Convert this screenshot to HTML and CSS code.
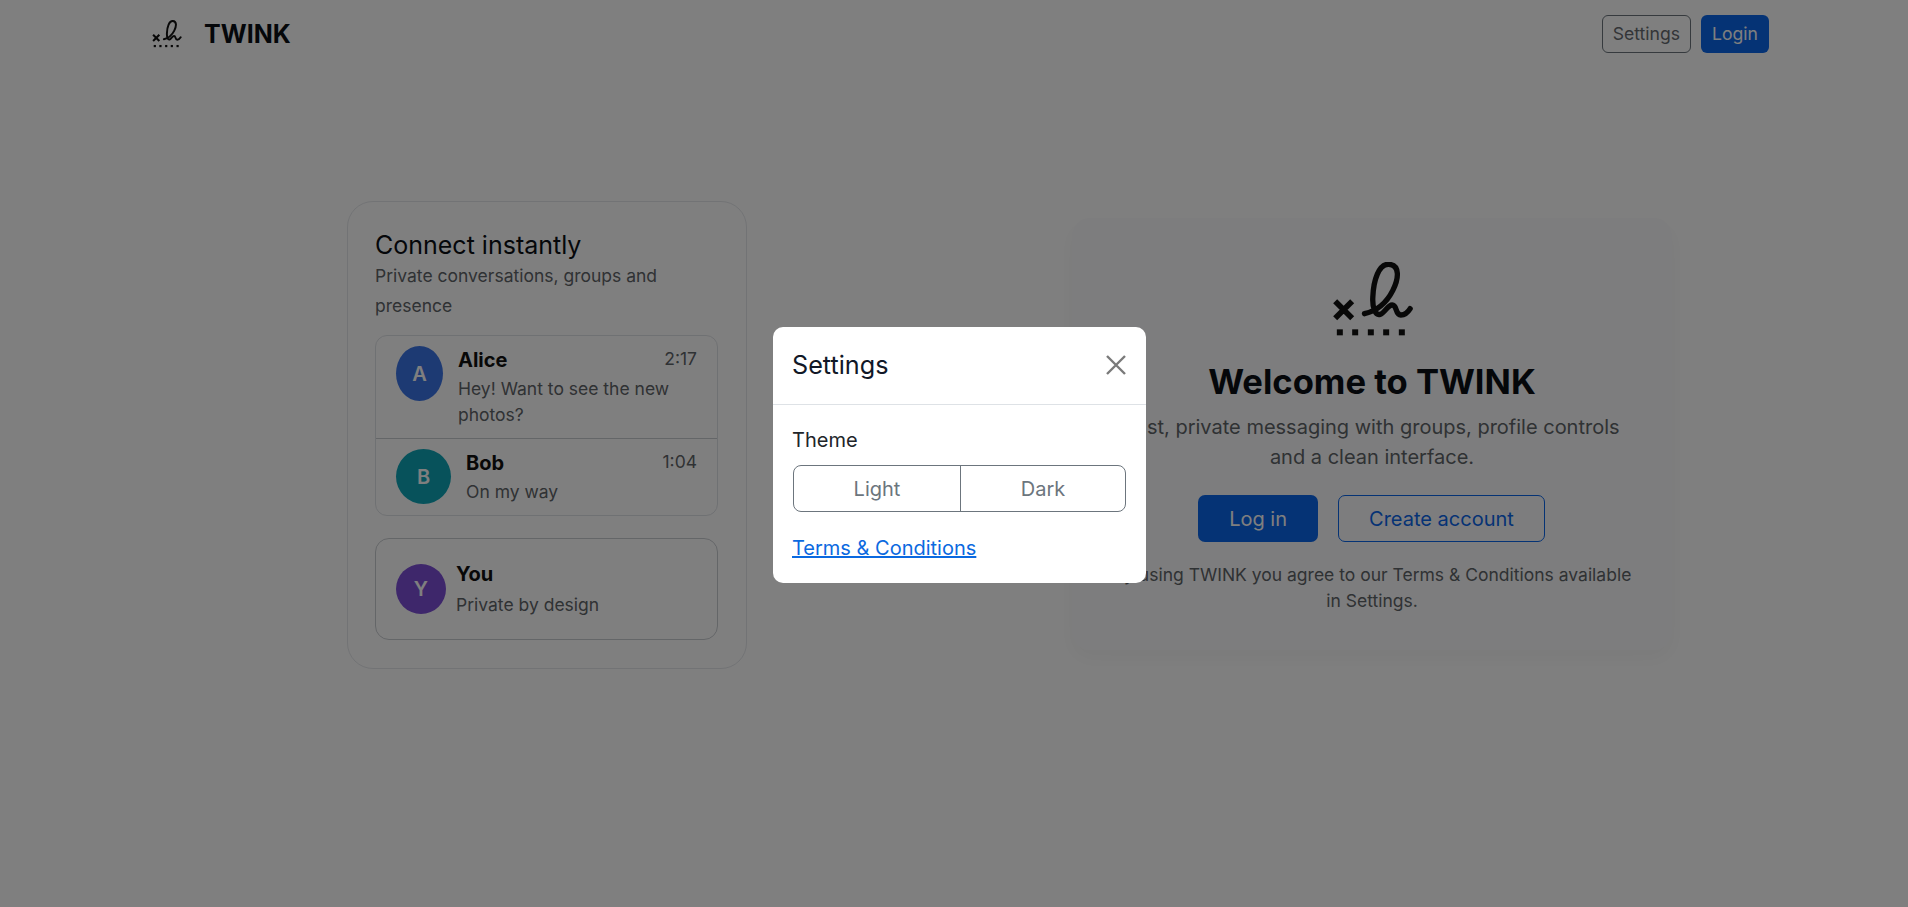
FILE: index.html
```html
<!DOCTYPE html>
<html lang="en">
<head>
    <meta charset="UTF-8">
    <title>TWINK</title>
    <link rel="stylesheet" href="styles.css">
</head>
<body>
    <svg class="defs" width="0" height="0">
        <symbol id="logo" viewBox="100 65 245 225">
            <path d="M197 220 C232 212 262 190 282 150 C300 115 304 74 270 72 C240 70 224 120 222 170 C220 205 230 226 244 222 C258 218 266 194 280 194 C296 194 288 224 306 224 C318 224 328 215 334 205" fill="none" stroke="currentColor" stroke-width="16" stroke-linecap="round"/>
            <path d="M109 183 L160 234 M160 183 L109 234" fill="none" stroke="currentColor" stroke-width="17"/>
            <rect x="114" y="267" width="18" height="18" fill="currentColor"/>
            <rect x="160" y="267" width="18" height="18" fill="currentColor"/>
            <rect x="207" y="267" width="18" height="18" fill="currentColor"/>
            <rect x="253" y="267" width="18" height="18" fill="currentColor"/>
            <rect x="300" y="267" width="18" height="18" fill="currentColor"/>
        </symbol>
    </svg>

    <nav class="navbar">
        <div class="brand">
            <svg class="brand-logo"><use href="#logo"/></svg>
            <span class="brand-name">TWINK</span>
        </div>
        <div class="nav-actions">
            <button type="button" class="btn btn-ghost">Settings</button>
            <button type="button" class="btn btn-primary">Login</button>
        </div>
    </nav>

    <main class="hero">
        <section class="preview">
            <h2 class="preview-title">Connect instantly</h2>
            <p class="preview-sub">Private conversations, groups and presence</p>

            <div class="chat-list">
                <div class="chat-row">
                    <div class="avatar avatar-blue avatar-squeezed">A</div>
                    <div class="chat-body">
                        <div class="chat-head">
                            <span class="chat-name">Alice</span>
                            <span class="chat-time">2:17</span>
                        </div>
                        <div class="chat-msg">Hey! Want to see the new photos?</div>
                    </div>
                </div>
                <div class="chat-row">
                    <div class="avatar avatar-teal">B</div>
                    <div class="chat-body">
                        <div class="chat-head">
                            <span class="chat-name">Bob</span>
                            <span class="chat-time">1:04</span>
                        </div>
                        <div class="chat-msg">On my way</div>
                    </div>
                </div>
            </div>

            <div class="you-card">
                <div class="avatar avatar-purple avatar-you">Y</div>
                <div class="you-body">
                    <div class="chat-name you-name">You</div>
                    <div class="you-sub">Private by design</div>
                </div>
            </div>
        </section>

        <section class="welcome">
            <svg class="welcome-logo"><use href="#logo"/></svg>
            <h1 class="welcome-title">Welcome to TWINK</h1>
            <p class="welcome-text">Fast, private messaging with groups, profile controls and a clean interface.</p>
            <div class="welcome-actions">
                <button type="button" class="btn btn-primary btn-lg">Log in</button>
                <button type="button" class="btn btn-outline btn-lg">Create account</button>
            </div>
            <p class="welcome-note">By using TWINK you agree to our Terms &amp; Conditions available in Settings.</p>
        </section>
    </main>

    <div class="backdrop"></div>

    <div class="modal">
        <div class="modal-header">
            <h3 class="modal-title">Settings</h3>
            <svg class="modal-close" viewBox="0 0 20 20"><path d="M1 1 L19 19 M19 1 L1 19" fill="none" stroke="#7a7a7a" stroke-width="2.4"/></svg>
        </div>
        <div class="modal-body">
            <div class="theme-label">Theme</div>
            <div class="segment">
                <button type="button" class="segment-btn">Light</button>
                <button type="button" class="segment-btn">Dark</button>
            </div>
            <a class="terms-link" href="#">Terms &amp; Conditions</a>
        </div>
    </div>
</body>
</html>
```

FILE: styles.css
```css
* {
    box-sizing: border-box;
}
html, body {
    height: 100%;
}
body {
    margin: 0;
    background: #fff;
    color: #111827;
    font-family: Inter, "Liberation Sans", sans-serif;
    overflow: hidden;
}
h1, h2, h3, p {
    margin: 0;
}
.defs {
    position: absolute;
}

/* top bar */
.navbar {
    display: flex;
    justify-content: space-between;
    align-items: center;
    height: 68px;
    padding: 0 139px 0 152px;
}
.brand {
    display: flex;
    align-items: center;
    gap: 22px;
}
.brand-logo {
    width: 30px;
    height: 28px;
    color: #111;
}
.brand-name {
    font-size: 25px;
    font-weight: 700;
    color: #0b0f14;
}
.nav-actions {
    display: flex;
    gap: 10px;
}
.btn {
    height: 38px;
    padding: 0 10px;
    border: 1px solid transparent;
    border-radius: 6px;
    font-family: inherit;
    font-size: 17.6px;
    line-height: 1;
}
.btn-ghost {
    background: transparent;
    border-color: #6c757d;
    color: #666b70;
}
.btn-primary {
    background: #0b66ea;
    color: #fff;
}
.btn-outline {
    background: transparent;
    border-color: #0b66ea;
    color: #0b66ea;
}
.btn-lg {
    height: 47px;
    padding: 0 30px;
    border-radius: 7px;
    font-size: 20px;
}

/* main area */
.hero {
    display: flex;
    align-items: flex-start;
    gap: 325px;
    padding: 133px 0 0 347px;
}
.preview {
    width: 400px;
    padding: 28px 28px 28px 27px;
    border: 1px solid #e5e7eb;
    border-radius: 26px;
}
.preview-title {
    font-size: 25px;
    font-weight: 400;
    line-height: 30px;
    color: #0b0f14;
}
.preview-sub {
    margin-top: 1px;
    font-size: 17.5px;
    line-height: 30px;
    color: #5f6468;
}
.chat-list {
    margin-top: 14px;
    border: 1px solid #dfe2e6;
    border-radius: 12px;
}
.chat-row {
    display: flex;
    gap: 15px;
    padding: 10px 20px;
}
.chat-row + .chat-row {
    border-top: 1px solid #c9ccd1;
}
.avatar {
    flex: none;
    display: flex;
    justify-content: center;
    align-items: center;
    width: 55px;
    height: 55px;
    border-radius: 50%;
    color: #fff;
    font-size: 20px;
    font-weight: 600;
}
.avatar-squeezed {
    width: 47px;
}
.avatar-you {
    width: 50px;
    height: 50px;
}
.avatar-blue {
    background: #3b74e6;
}
.avatar-teal {
    background: #0ea5b7;
}
.avatar-purple {
    background: #7c4fd6;
}
.chat-body {
    flex: 1;
}
.chat-head {
    display: flex;
    justify-content: space-between;
}
.chat-name {
    font-size: 20px;
    font-weight: 700;
    line-height: 29px;
    color: #111;
}
.chat-time {
    font-size: 17.5px;
    line-height: 25px;
    color: #5f6468;
}
.chat-msg {
    margin-top: 1px;
    font-size: 17.5px;
    line-height: 26px;
    color: #5f6468;
}
.you-card {
    display: flex;
    align-items: center;
    gap: 10px;
    height: 102px;
    margin-top: 22px;
    padding: 0 20px;
    border: 1px solid #c9ccd1;
    border-radius: 14px;
}
.you-body {
    padding-top: 2px;
}
.you-name {
    line-height: 29px;
}
.you-sub {
    font-size: 17.5px;
    line-height: 31px;
    color: #5f6468;
}

.welcome {
    display: flex;
    flex-direction: column;
    align-items: center;
    width: 600px;
    height: 432px;
    margin-top: 17px;
    padding: 44px 36px 0;
    border-radius: 18px;
    background: #fbfbfc;
    box-shadow: 0 8px 20px rgba(0, 0, 0, 0.04);
    text-align: center;
}
.welcome-logo {
    width: 82px;
    height: 75px;
    margin-left: 2px;
    color: #111;
}
.welcome-title {
    margin-top: 22px;
    font-size: 34.6px;
    font-weight: 700;
    line-height: 44px;
    color: #0b0f14;
}
.welcome-text {
    margin-top: 9px;
    font-size: 20px;
    line-height: 30px;
    color: #5f6468;
}
.welcome-actions {
    display: flex;
    gap: 20px;
    margin-top: 23px;
    margin-right: 1px;
}
.welcome-note {
    margin-top: 20px;
    font-size: 17.5px;
    line-height: 26px;
    color: #5f6468;
}

/* settings dialog */
.backdrop {
    position: fixed;
    inset: 0;
    background: rgba(0, 0, 0, 0.5);
}
.modal {
    position: fixed;
    left: 773px;
    top: 327px;
    width: 373px;
    height: 256px;
    border-radius: 10px;
    background: #fff;
}
.modal-header {
    display: flex;
    justify-content: space-between;
    align-items: center;
    height: 78px;
    padding: 0 20px 2px 19px;
    border-bottom: 1px solid #dee2e6;
}
.modal-title {
    font-size: 25.2px;
    font-weight: 400;
    color: #111827;
}
.modal-close {
    width: 20px;
    height: 20px;
}
.modal-body {
    padding: 20px 20px 20px 19px;
}
.theme-label {
    font-size: 20px;
    line-height: 30px;
    color: #212529;
}
.segment {
    display: flex;
    height: 47px;
    margin-top: 10px;
    margin-left: 1px;
    border: 1px solid #6c757d;
    border-radius: 8px;
}
.segment-btn {
    flex: 1;
    border: 0;
    background: transparent;
    font-family: inherit;
    font-size: 20px;
    color: #6c757d;
}
.segment-btn:first-child {
    flex: none;
    width: 166px;
}
.segment-btn + .segment-btn {
    border-left: 1px solid #6c757d;
}
.terms-link {
    display: block;
    margin-top: 21px;
    font-size: 20px;
    line-height: 30px;
    color: #0b69e0;
}
```
